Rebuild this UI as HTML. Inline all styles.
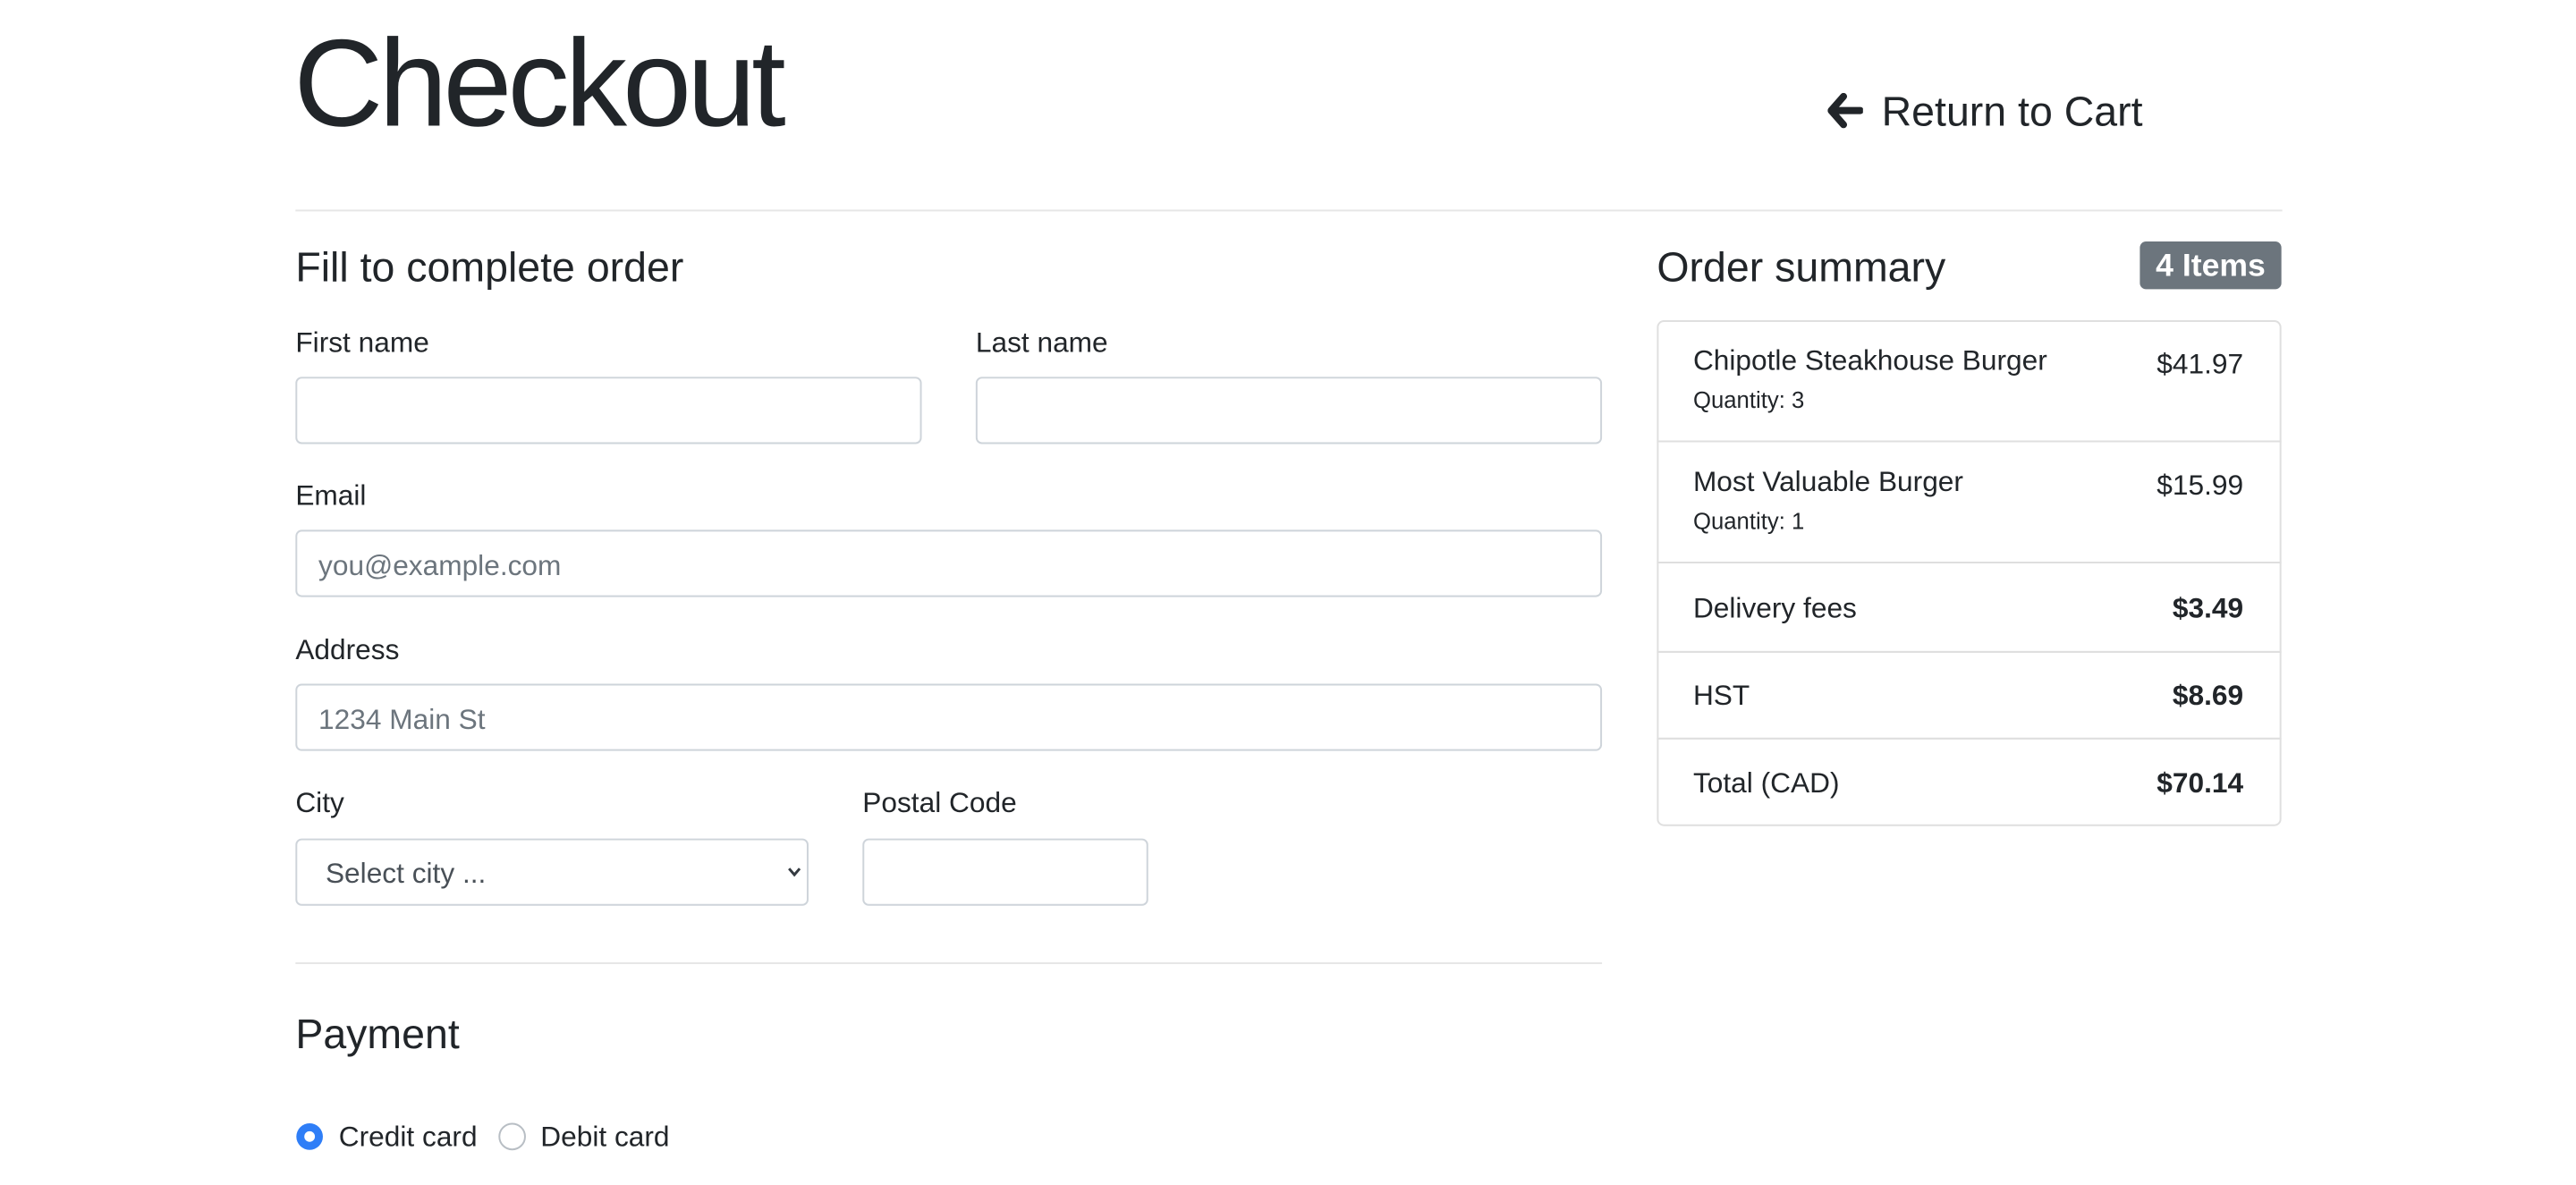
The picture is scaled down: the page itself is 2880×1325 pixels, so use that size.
<!DOCTYPE html>
<html><head><meta charset="utf-8"><style>
html,body{margin:0;padding:0;background:#fff;}
body{width:2880px;height:1323px;position:relative;overflow:hidden;font-family:"Liberation Sans",Arial,sans-serif;color:#212529;}
#w{position:absolute;left:0;top:0;width:2880px;height:1340px;transform:scale(0.989);transform-origin:0 0;}
.a{position:absolute;line-height:1;white-space:nowrap;}
.inp{position:absolute;box-sizing:border-box;border:2px solid #ced4da;border-radius:7px;background:#fff;}
.hr{position:absolute;height:2px;background:#e6e6e6;}
.row{position:absolute;left:1873px;width:706px;box-sizing:border-box;border:2px solid #dfdfdf;}
</style></head><body><div id="w">
<div class="a" style="left:332px;top:24px;font-size:140px;letter-spacing:-5px;font-weight:300;">Checkout</div>
<svg class="a" style="left:2066px;top:105px" width="40" height="40" viewBox="0 0 40 40"><path d="M18 4 L4 20 L18 36 M5 20 H37" stroke="#212529" stroke-width="8" stroke-linecap="round" stroke-linejoin="round" fill="none"/></svg>
<div class="a" style="left:2127px;top:102px;font-size:47px;">Return to Cart</div>
<div class="hr" style="left:334px;top:237px;width:2246px;"></div>

<div class="a" style="left:334px;top:278px;font-size:47px;">Fill to complete order</div>
<div class="a" style="left:334px;top:371px;font-size:32px;">First name</div>
<div class="a" style="left:1103px;top:371px;font-size:32px;">Last name</div>
<div class="inp" style="left:334px;top:426px;width:708px;height:76px;"></div>
<div class="inp" style="left:1103px;top:426px;width:708px;height:76px;"></div>

<div class="a" style="left:334px;top:544px;font-size:32px;">Email</div>
<div class="inp" style="left:334px;top:599px;width:1477px;height:76px;"></div>
<div class="a" style="left:360px;top:623px;font-size:32px;color:#6c757d;">you@example.com</div>

<div class="a" style="left:334px;top:718px;font-size:32px;">Address</div>
<div class="inp" style="left:334px;top:773px;width:1477px;height:76px;"></div>
<div class="a" style="left:360px;top:797px;font-size:32px;color:#6c757d;">1234 Main St</div>

<div class="a" style="left:334px;top:891px;font-size:32px;">City</div>
<div class="a" style="left:975px;top:891px;font-size:32px;">Postal Code</div>
<div class="inp" style="left:334px;top:948px;width:580px;height:76px;"></div>
<div class="a" style="left:368px;top:971px;font-size:32px;color:#495057;">Select city ...</div>
<svg class="a" style="left:890px;top:979px" width="16" height="14" viewBox="0 0 16 14"><path d="M2 3 L8 10 L14 3" stroke="#343a40" stroke-width="3" fill="none"/></svg>
<div class="inp" style="left:975px;top:948px;width:323px;height:76px;"></div>

<div class="hr" style="left:334px;top:1088px;width:1477px;"></div>
<div class="a" style="left:334px;top:1145px;font-size:47px;">Payment</div>
<svg class="a" style="left:334px;top:1269px" width="32" height="32" viewBox="0 0 32 32"><circle cx="16" cy="16" r="15" fill="#2f7ef7"/><circle cx="16" cy="16" r="6" fill="#fff"/></svg>
<div class="a" style="left:383px;top:1269px;font-size:32px;">Credit card</div>
<svg class="a" style="left:563px;top:1269px" width="32" height="32" viewBox="0 0 32 32"><circle cx="16" cy="16" r="14.5" fill="#fff" stroke="#b8bec4" stroke-width="2"/></svg>
<div class="a" style="left:611px;top:1269px;font-size:32px;">Debit card</div>

<div class="a" style="left:1873px;top:278px;font-size:47px;">Order summary</div>
<div class="a" style="left:2419px;top:273px;width:160px;height:54px;background:#6c757d;border-radius:7px;color:#fff;font-weight:bold;font-size:36px;line-height:54px;text-align:center;">4 Items</div>

<div class="row" style="top:362px;height:138px;border-radius:8px 8px 0 0;"></div>
<div class="row" style="top:498px;height:139px;"></div>
<div class="row" style="top:635px;height:103px;"></div>
<div class="row" style="top:736px;height:100px;"></div>
<div class="row" style="top:834px;height:100px;border-radius:0 0 8px 8px;"></div>

<div class="a" style="left:1914px;top:391px;font-size:32px;font-weight:500;">Chipotle Steakhouse Burger</div>
<div class="a" style="left:1914px;top:439px;font-size:26px;">Quantity: 3</div>
<div class="a" style="right:344px;top:395px;font-size:32px;">$41.97</div>
<div class="a" style="left:1914px;top:528px;font-size:32px;font-weight:500;">Most Valuable Burger</div>
<div class="a" style="left:1914px;top:576px;font-size:26px;">Quantity: 1</div>
<div class="a" style="right:344px;top:532px;font-size:32px;">$15.99</div>
<div class="a" style="left:1914px;top:671px;font-size:32px;">Delivery fees</div>
<div class="a" style="right:344px;top:671px;font-size:32px;font-weight:bold;">$3.49</div>
<div class="a" style="left:1914px;top:770px;font-size:32px;">HST</div>
<div class="a" style="right:344px;top:770px;font-size:32px;font-weight:bold;">$8.69</div>
<div class="a" style="left:1914px;top:869px;font-size:32px;">Total (CAD)</div>
<div class="a" style="right:344px;top:869px;font-size:32px;font-weight:bold;">$70.14</div>
</div></body></html>
